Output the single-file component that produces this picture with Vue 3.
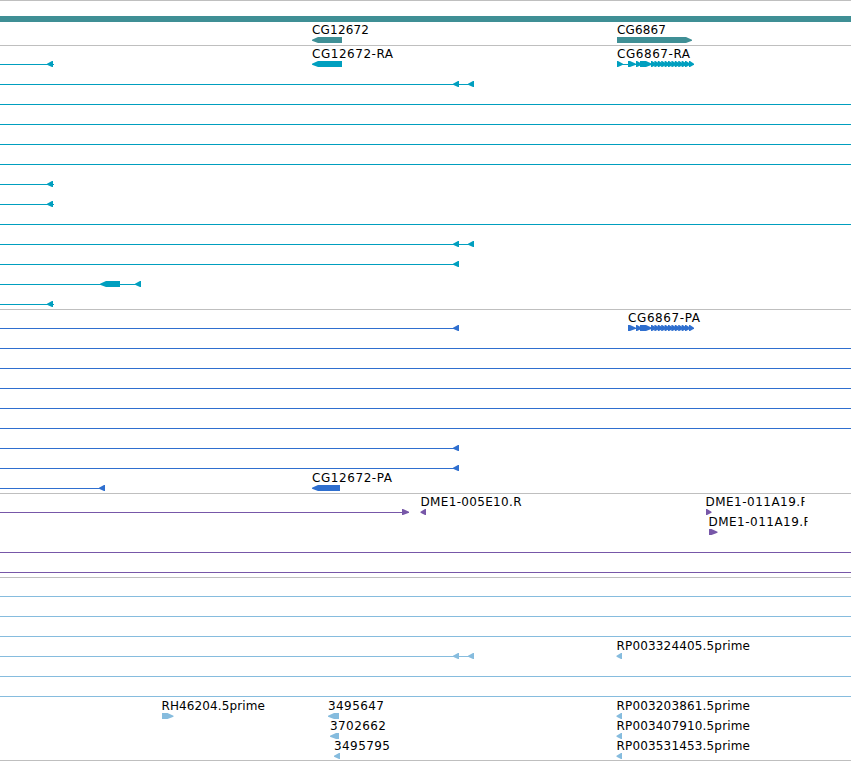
<template>
  <div class="browser">
    <div class="contig"></div>
    <section
      v-for="track in tracks"
      :key="track.name"
      class="track"
      :class="track.name"
    >
      <svg
        v-for="(row, i) in track.rows"
        :key="i"
        class="row"
        width="851"
        height="20"
      >
        <rect v-for="(line, n) in row.lines" :key="'l' + n" :x="line[0]" y="18" :width="line[1] - line[0]" height="1" />
        <polygon v-for="(f, n) in row.features" :key="'f' + n" :points="shape(f)" />
        <svg
          v-for="label in row.labels"
          :key="label.text"
          :x="label.x"
          y="0"
          :width="label.clip || label.w + 4"
          height="18"
        >
          <text x="0" y="12" :textLength="label.w">{{ label.text }}</text>
        </svg>
      </svg>
    </section>
  </div>
</template>

<script setup>
const FULL = [0, 851]

// feature: [start, end, direction]
const left = (start, end = start + 6) => [start, end, -1]
const right = (start, end = start + 6) => [start, end, 1]
const label = (text, x, w, clip) => ({ text, x, w, clip })

const full = () => ({ lines: [FULL] })
const short = () => ({ lines: [[0, 54]], features: [left(47, 53)] })
const medium = () => ({ lines: [[0, 459]], features: [left(453)] })
const double = () => ({ lines: [[0, 474]], features: [left(453), left(468)] })

// tightly packed exons at the 3' end of CG6867
const exons = [right(628, 636), right(636, 642), right(640, 652)]
for (let x = 651; x < 686; x += 3.4) {
  exons.push(right(x, x + 5.5))
}
exons.push(right(689, 694))

const tracks = [
  {
    name: 'gene',
    rows: [
      {
        features: [left(312, 342), right(617, 692)],
        labels: [label('CG12672', 312, 57), label('CG6867', 617, 49)]
      }
    ]
  },
  {
    name: 'transcript',
    rows: [
      {
        lines: [[0, 54], [617, 694]],
        features: [left(47, 53), left(312, 342), right(617, 623), ...exons],
        labels: [label('CG12672-RA', 312, 81), label('CG6867-RA', 617, 73)]
      },
      double(),
      full(),
      full(),
      full(),
      full(),
      short(),
      short(),
      full(),
      double(),
      medium(),
      { lines: [[0, 141]], features: [left(100, 120), left(135)] },
      short()
    ]
  },
  {
    name: 'protein',
    rows: [
      {
        lines: [[0, 459], [628, 694]],
        features: [left(453), ...exons],
        labels: [label('CG6867-PA', 628, 72)]
      },
      full(),
      full(),
      full(),
      full(),
      full(),
      medium(),
      medium(),
      {
        lines: [[0, 105]],
        features: [left(99), left(312, 340)],
        labels: [label('CG12672-PA', 312, 80)]
      }
    ]
  },
  {
    name: 'bac',
    rows: [
      {
        lines: [[0, 409]],
        features: [right(402, 409), left(420.5, 426), right(706, 711.5)],
        labels: [label('DME1-005E10.R', 420.5, 101), label('DME1-011A19.F', 705.5, 102, 99)]
      },
      {
        features: [right(709, 717.5)],
        labels: [label('DME1-011A19.F', 708.5, 102, 99)]
      },
      full(),
      full()
    ]
  },
  {
    name: 'est',
    rows: [
      full(),
      full(),
      full(),
      {
        lines: [[0, 474]],
        features: [left(453), left(468), left(616.5, 622)],
        labels: [label('RP003324405.5prime', 616.5, 133.5)]
      },
      full(),
      full(),
      {
        features: [right(162, 173.5), left(328, 339), left(616.5, 622)],
        labels: [
          label('RH46204.5prime', 161.5, 103.5),
          label('3495647', 328, 56),
          label('RP003203861.5prime', 616.5, 133.5)
        ]
      },
      {
        features: [left(330, 339), left(616.5, 622)],
        labels: [label('3702662', 330, 56), label('RP003407910.5prime', 616.5, 133.5)]
      },
      {
        features: [left(334, 340), left(616.5, 622)],
        labels: [label('3495795', 334, 56), label('RP003531453.5prime', 616.5, 133.5)]
      }
    ]
  }
]

// block with a pointed end, the head is at most 6px long
function shape([start, end, dir]) {
  const head = Math.min(6, end - start - 1)
  const tip = dir < 0 ? start : end
  const neck = dir < 0 ? start + head : end - head
  const tail = dir < 0 ? end : start
  return `${tip},17.8 ${neck},15 ${tail},15 ${tail},21 ${neck},21 ${tip},18.7`
}
</script>

<style>
body {
  margin: 0;
  background: #fff;
}
</style>

<style scoped>
.browser {
  width: 851px;
  height: 761px;
  box-sizing: border-box;
  border-top: 1px solid #bfbfbf;
  padding-top: 15px;
  overflow: hidden;
  background: #fff;
}

.contig {
  height: 6px;
  background: #3f8f95;
}

.track {
  display: flex;
  flex-direction: column;
  padding-bottom: 3px;
  border-bottom: 1px solid #bfbfbf;
}

.track:last-child {
  padding-bottom: 2px;
}

.row {
  display: block;
  flex: none;
  overflow: visible;
}

.row text {
  font-family: "DejaVu Sans", sans-serif;
  font-size: 12px;
  fill: #000;
}

.gene {
  fill: #3f8f95;
}

.transcript {
  fill: #009fbf;
}

.protein {
  fill: #2f6fcf;
}

.bac {
  fill: #7757a8;
}

.est {
  fill: #86bcde;
}
</style>
